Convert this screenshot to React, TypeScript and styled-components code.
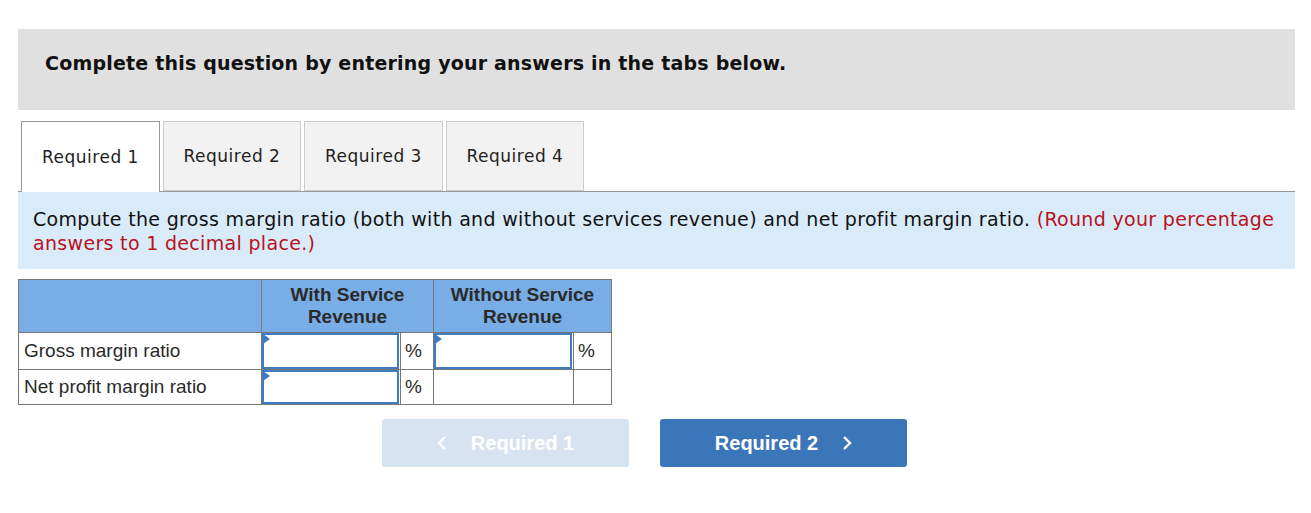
import React from 'react';
import styled, { createGlobalStyle } from 'styled-components';

const GlobalStyle = createGlobalStyle`
  html, body {
    margin: 0;
    padding: 0;
    background: #fff;
  }
`;

const Page = styled.div`
  padding: 29px 16px 0 18px;
  font-family: 'DejaVu Sans', Verdana, sans-serif;
  color: #111;
`;

const Banner = styled.div`
  background: #e0e0e0;
  height: 81px;
  padding: 22px 0 0 27px;
  box-sizing: border-box;
  font-weight: bold;
  font-size: 19px;
  letter-spacing: 0.2px;
  line-height: 24px;
  margin-bottom: 11px;
`;

const TabStrip = styled.div`
  display: flex;
  gap: 3px;
  padding-left: 3px;
  border-bottom: 1px solid #999;
  height: 71px;
  box-sizing: border-box;
`;

const Tab = styled.div<{ active?: boolean; w: number }>`
  width: ${(p) => p.w}px;
  height: ${(p) => (p.active ? '71px' : '70px')};
  box-sizing: border-box;
  display: flex;
  align-items: center;
  justify-content: center;
  font-size: 17px;
  letter-spacing: 0.5px;
  color: #222;
  background: ${(p) => (p.active ? '#fff' : '#f2f2f2')};
  border: 1px solid ${(p) => (p.active ? '#999' : '#ccc')};
  border-bottom: ${(p) => (p.active ? 'none' : '1px solid #ccc')};
  position: relative;
  z-index: ${(p) => (p.active ? 1 : 0)};
`;

const Instruction = styled.div`
  background: #d9ebf9;
  padding: 15px 15px 14px 15px;
  font-size: 19px;
  letter-spacing: 0.32px;
  line-height: 24px;
  color: #111;
  margin-bottom: 10px;
`;

const Red = styled.span`
  color: #b8121b;
`;

const Table = styled.table`
  border-collapse: collapse;
  font-family: 'Liberation Sans', Arial, sans-serif;
  font-size: 19px;
  color: #2a2a2a;
`;

const HeadCell = styled.th<{ w: number }>`
  background: #79ade5;
  border: 1px solid #777;
  width: ${(p) => p.w}px;
  height: 52px;
  padding: 0;
  font-weight: bold;
  line-height: 22px;
  vertical-align: middle;
  text-align: center;
`;

const Cell = styled.td<{ w?: number }>`
  border: 1px solid #777;
  padding: 0;
  width: ${(p) => (p.w ? `${p.w}px` : 'auto')};
`;

const LabelCell = styled(Cell)`
  padding-left: 5px;
  text-align: left;
  white-space: nowrap;
`;

const PctCell = styled(Cell)`
  text-align: left;
  padding-left: 4px;
`;

const InputBox = styled.div<{ h: number }>`
  position: relative;
  height: ${(p) => p.h}px;
  border: 2px solid #3e7bc1;
  box-sizing: border-box;
  margin: 0 1px 0 0;
  background: #fff;
  &::before {
    content: '';
    position: absolute;
    left: -1px;
    top: -1px;
    border-left: 7px solid #3e7bc1;
    border-top: 5px solid transparent;
    border-bottom: 5px solid transparent;
  }
`;

const Nav = styled.div`
  display: flex;
  gap: 31px;
  padding-left: 364px;
  margin-top: 14px;
`;

const NavButton = styled.button<{ disabled?: boolean }>`
  width: 247px;
  height: 48px;
  border: none;
  border-radius: 3px;
  background: ${(p) => (p.disabled ? '#d7e3f1' : '#3b76bb')};
  color: #fff;
  font-family: 'Liberation Sans', Arial, sans-serif;
  font-size: 20px;
  font-weight: bold;
  display: flex;
  align-items: center;
  justify-content: center;
  gap: 24px;
  cursor: ${(p) => (p.disabled ? 'default' : 'pointer')};
`;

const Chevron = ({ dir }: { dir: 'left' | 'right' }) => (
  <svg width="10" height="16" viewBox="0 0 10 16">
    <path
      d={dir === 'left' ? 'M8 2 L2 8 L8 14' : 'M2 2 L8 8 L2 14'}
      fill="none"
      stroke="#fff"
      strokeWidth="2.4"
    />
  </svg>
);

const tabs = [
  { label: 'Required 1', w: 139 },
  { label: 'Required 2', w: 138 },
  { label: 'Required 3', w: 139 },
  { label: 'Required 4', w: 138 },
];

export default function App() {
  return (
    <Page>
      <GlobalStyle />
      <Banner>Complete this question by entering your answers in the tabs below.</Banner>
      <TabStrip>
        {tabs.map((t, i) => (
          <Tab key={t.label} w={t.w} active={i === 0}>
            {t.label}
          </Tab>
        ))}
      </TabStrip>
      <Instruction>
        Compute the gross margin ratio (both with and without services revenue) and net profit
        margin ratio. <Red>(Round your percentage answers to 1 decimal place.)</Red>
      </Instruction>
      <Table>
        <thead>
          <tr>
            <HeadCell w={237} />
            <HeadCell w={171} colSpan={2}>
              With Service
              <br />
              Revenue
            </HeadCell>
            <HeadCell w={177} colSpan={2}>
              Without Service
              <br />
              Revenue
            </HeadCell>
          </tr>
        </thead>
        <tbody>
          <tr style={{ height: 37 }}>
            <LabelCell w={237}>Gross margin ratio</LabelCell>
            <Cell w={138}>
              <InputBox h={36} />
            </Cell>
            <PctCell w={28}>%</PctCell>
            <Cell w={139}>
              <InputBox h={36} />
            </Cell>
            <PctCell w={33}>%</PctCell>
          </tr>
          <tr style={{ height: 35 }}>
            <LabelCell>Net profit margin ratio</LabelCell>
            <Cell>
              <InputBox h={34} />
            </Cell>
            <PctCell>%</PctCell>
            <Cell />
            <PctCell />
          </tr>
        </tbody>
      </Table>
      <Nav>
        <NavButton disabled>
          <Chevron dir="left" />
          Required 1
        </NavButton>
        <NavButton>
          Required 2
          <Chevron dir="right" />
        </NavButton>
      </Nav>
    </Page>
  );
}
